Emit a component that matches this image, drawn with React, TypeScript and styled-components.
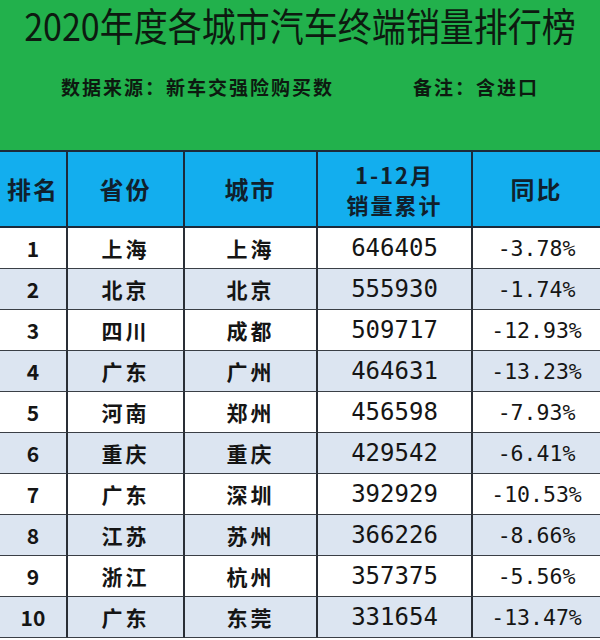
import React from "react";
import styled, { createGlobalStyle } from "styled-components";

const Global = createGlobalStyle`
  html, body { margin: 0; padding: 0; background: #ffffff; }
  body { font-family: "Noto Sans CJK SC", "Noto Sans", sans-serif; }
`;

const Page = styled.div`
  width: 600px;
  height: 640px;
  overflow: hidden;
  background: #ffffff;
  color: #111111;
`;

const Banner = styled.div`
  height: 150px;
  background: #22b14c;
  border-bottom: 2px solid #1c2a3a;
  display: flex;
  flex-direction: column;
  align-items: stretch;
`;

const Title = styled.h1`
  margin: 0;
  height: 50px;
  line-height: 50px;
  text-align: center;
  white-space: nowrap;
  font-family: "Noto Sans CJK SC", sans-serif;
  font-size: 34px;
  font-weight: 400;
  letter-spacing: 0;
  color: #0d1a10;
  transform: scaleY(1.12);
`;

const NoteRow = styled.div`
  margin-top: 25px;
  padding-left: 61px;
  display: flex;
  gap: 79px;
  height: 24px;
  line-height: 24px;
  white-space: nowrap;
  font-family: "Noto Sans CJK SC", sans-serif;
  font-size: 19px;
  font-weight: 700;
  letter-spacing: 2px;
  color: #0d1a10;
`;

const Grid = styled.div`
  display: grid;
  grid-template-columns: 68px 117px 133px 155px 127px;
`;

const HeadCell = styled.div<{ $last?: boolean; $small?: boolean }>`
  height: 74px;
  background: #13aeee;
  border-bottom: 2px solid #1c2a3a;
  border-right: ${(p) => (p.$last ? "none" : "2px solid #1c2a3a")};
  display: flex;
  flex-direction: column;
  align-items: center;
  justify-content: center;
  font-family: "Noto Sans CJK SC", sans-serif;
  font-weight: 700;
  font-size: ${(p) => (p.$small ? "22px" : "24px")};
  line-height: 30px;
  letter-spacing: 2px;
  color: #10202c;
`;

const Cell = styled.div<{ $alt: boolean; $last?: boolean; $kind: string }>`
  height: 40px;
  background: ${(p) => (p.$alt ? "#dce5f1" : "#ffffff")};
  border-bottom: 1px solid #3a3f46;
  border-right: ${(p) => (p.$last ? "none" : "2px solid #2a2f36")};
  display: flex;
  align-items: center;
  justify-content: center;
  white-space: nowrap;
  color: #151515;
  font-family: ${(p) =>
    p.$kind === "num" || p.$kind === "pct"
      ? '"DejaVu Sans Mono", "Liberation Mono", monospace'
      : '"Noto Sans CJK SC", sans-serif'};
  font-weight: ${(p) => (p.$kind === "num" || p.$kind === "pct" ? 400 : 700)};
  font-size: ${(p) => (p.$kind === "num" ? "24px" : p.$kind === "pct" ? "21.5px" : "21px")};
  letter-spacing: ${(p) => (p.$kind === "cjk" ? "3px" : "0")};
`;

const rows: [string, string, string, string, string][] = [
  ["1", "上海", "上海", "646405", "-3.78%"],
  ["2", "北京", "北京", "555930", "-1.74%"],
  ["3", "四川", "成都", "509717", "-12.93%"],
  ["4", "广东", "广州", "464631", "-13.23%"],
  ["5", "河南", "郑州", "456598", "-7.93%"],
  ["6", "重庆", "重庆", "429542", "-6.41%"],
  ["7", "广东", "深圳", "392929", "-10.53%"],
  ["8", "江苏", "苏州", "366226", "-8.66%"],
  ["9", "浙江", "杭州", "357375", "-5.56%"],
  ["10", "广东", "东莞", "331654", "-13.47%"],
];

export default function App() {
  return (
    <Page>
      <Global />
      <Banner>
        <Title>2020年度各城市汽车终端销量排行榜</Title>
        <NoteRow>
          <span>数据来源：新车交强险购买数</span>
          <span>备注：含进口</span>
        </NoteRow>
      </Banner>
      <Grid>
        <HeadCell>排名</HeadCell>
        <HeadCell>省份</HeadCell>
        <HeadCell>城市</HeadCell>
        <HeadCell $small>
          <span>1-12月</span>
          <span>销量累计</span>
        </HeadCell>
        <HeadCell $last>同比</HeadCell>
        {rows.map((r, i) => {
          const alt = i % 2 === 1;
          return (
            <React.Fragment key={r[0]}>
              <Cell $alt={alt} $kind="rank">{r[0]}</Cell>
              <Cell $alt={alt} $kind="cjk">{r[1]}</Cell>
              <Cell $alt={alt} $kind="cjk">{r[2]}</Cell>
              <Cell $alt={alt} $kind="num">{r[3]}</Cell>
              <Cell $alt={alt} $kind="pct" $last>{r[4]}</Cell>
            </React.Fragment>
          );
        })}
      </Grid>
    </Page>
  );
}
